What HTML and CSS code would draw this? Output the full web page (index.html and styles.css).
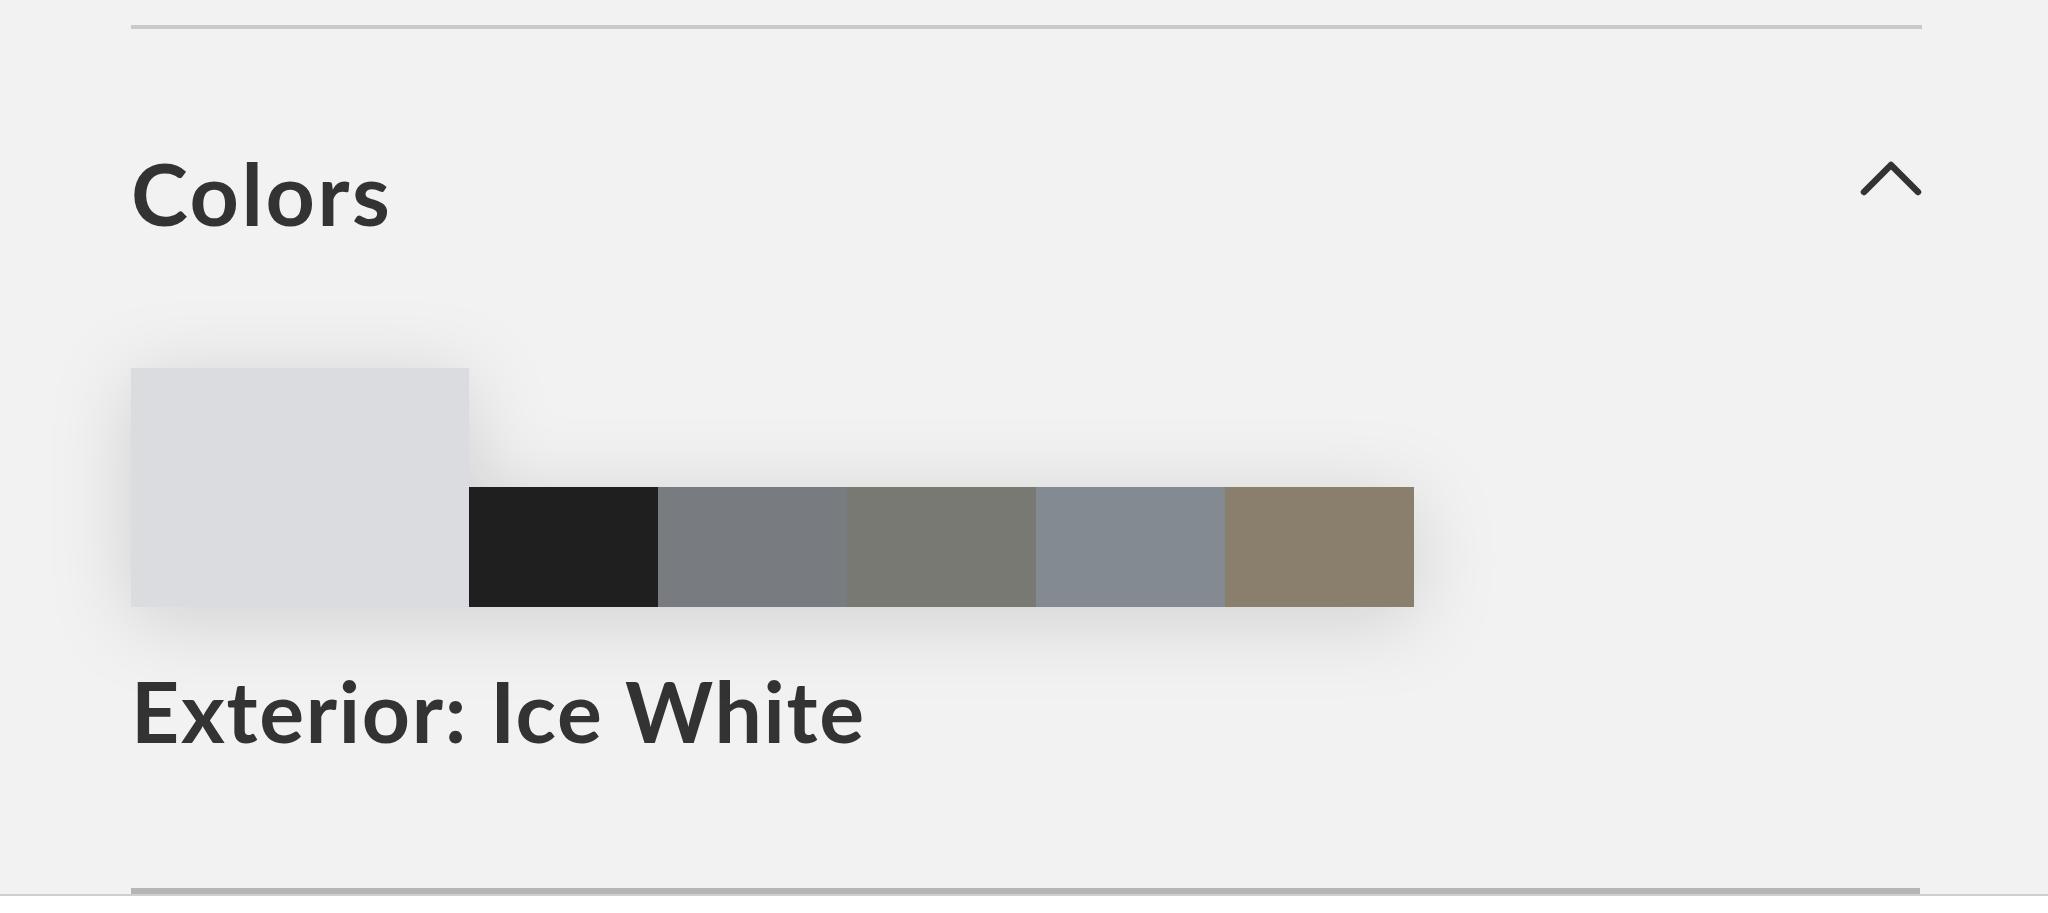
FILE: index.html
```html
<!DOCTYPE html>
<html lang="en">
<head>
    <meta charset="UTF-8">
    <meta name="viewport" content="width=device-width, initial-scale=1.0">
    <title>Colors</title>
    <link rel="stylesheet" href="styles.css">
</head>
<body>

    <div class="section">
        <div class="rule"></div>

        <!-- Kop met pijltje -->
        <div class="section-head">
            <h2 class="section-title">Colors</h2>
            <svg class="chevron" width="64" height="38" viewBox="0 0 64 38">
                <polyline points="6,33 33,6 60,33" fill="none" stroke="#333333" stroke-width="6.5" stroke-linecap="round" stroke-linejoin="round"/>
            </svg>
        </div>

        <!-- Kleurstalen -->
        <div class="swatches">
            <div class="swatch swatch-active" style="background-color: #dbdce0;"></div>
            <div class="swatch" style="background-color: #1f1f1f;"></div>
            <div class="swatch" style="background-color: #787b80;"></div>
            <div class="swatch" style="background-color: #777972;"></div>
            <div class="swatch" style="background-color: #838a92;"></div>
            <div class="swatch" style="background-color: #8a7f6c;"></div>
        </div>

        <div class="color-label">Exterior: Ice White</div>

        <div class="rule rule-bottom"></div>
    </div>

    <div class="page-foot"></div>

</body>
</html>
```

FILE: styles.css
```css
body {
    margin: 0;
    background-color: #f2f2f2;
    font-family: Lato, "Liberation Sans", sans-serif;
    color: #333333;
}

.section {
    display: flex;
    flex-direction: column;
    padding: 25px 126px 0 131px;
}

.rule {
    height: 4px;
    background-color: #c9c9c9;
}

.rule-bottom {
    height: 6px;
    margin-top: 135px;
    margin-right: 2px;
    background-color: #b6b6b6;
}

.section-head {
    display: flex;
    justify-content: space-between;
    align-items: flex-start;
    margin-top: 121px;
}

.section-title {
    margin: 0;
    font-size: 86px;
    line-height: 1;
    font-weight: 700;
    letter-spacing: 2.6px;
}

.chevron {
    margin-top: 9px;
}

/* Rij met kleuren, schaduw volgt de vorm */
.swatches {
    display: flex;
    align-items: flex-end;
    margin-top: 132px;
    filter: drop-shadow(0 12px 40px rgba(0, 0, 0, 0.14));
}

.swatch {
    width: 189px;
    height: 120px;
}

.swatch-active {
    width: 338px;
    height: 239px;
}

.color-label {
    margin-top: 62px;
    font-size: 84px;
    line-height: 1;
    font-weight: 700;
    letter-spacing: 1.7px;
}

.page-foot {
    height: 20px;
    border-top: 2px solid #cfcfcf;
    background-color: #ffffff;
}
```
